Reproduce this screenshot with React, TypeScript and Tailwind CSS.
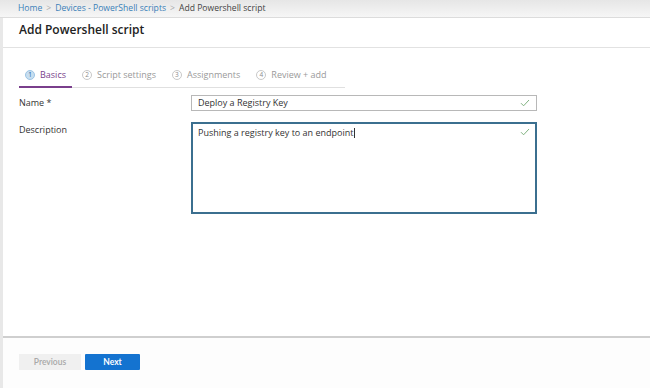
import React from "react";

const font = { fontFamily: '"Open Sans", "Noto Sans", Arial, sans-serif' };

function Check() {
  return (
    <svg width="10" height="8" viewBox="0 0 10 8" className="shrink-0">
      <path d="M1 4.2 L3.6 6.8 L9 1" fill="none" stroke="#7fb27f" strokeWidth="1" />
    </svg>
  );
}

function Step({ n, label, active }: { n: number; label: string; active?: boolean }) {
  return (
    <div
      className={`flex items-center gap-[5px] whitespace-nowrap px-[6px] pb-[4px] -mb-[1px] ${
        active ? "border-b-2 border-[#7a3f8c]" : "border-b-2 border-transparent"
      }`}
    >
      <span
        className={`flex h-[10px] w-[10px] items-center justify-center rounded-full text-[6.5px] leading-none ${
          active ? "bg-[#c7def0] text-[#1a5fa0] border border-[#9cc4e4]" : "border border-[#c8c8c8] text-[#8a8a8a] bg-white"
        }`}
      >
        {n}
      </span>
      <span className={`text-[9px] ${active ? "text-[#7a3f8c]" : "text-[#9a9a9a]"}`}>{label}</span>
    </div>
  );
}

export default function App() {
  return (
    <div className="flex h-[388px] w-[650px] flex-col bg-white text-[#333]" style={font}>
      <div className="flex h-[18px] items-center gap-[4px] border-b border-[#dcdcdc] bg-gradient-to-b from-[#e6e6e6] to-[#f6f6f6] pl-[18px] text-[8.6px]">
        <span className="text-[#3a7fb8]">Home</span>
        <span className="text-[#aaa]">&gt;</span>
        <span className="text-[#3a7fb8]">Devices - PowerShell scripts</span>
        <span className="text-[#aaa]">&gt;</span>
        <span className="text-[#444]">Add Powershell script</span>
      </div>
      <div className="flex flex-1 flex-col border-l-[3px] border-[#e8e8e8]">
        <div className="flex h-[30px] items-center border-b border-[#e2e2e2] pl-[16px] pb-[6px]">
          <h1 className="text-[12px] font-semibold text-[#222]">Add Powershell script</h1>
        </div>
        <div className="flex flex-1 flex-col px-[16px] pt-[20px]">
          <div className="flex w-[326px] gap-[4px] border-b border-[#e0e0e0]">
            <Step n={1} label="Basics" active />
            <Step n={2} label="Script settings" />
            <Step n={3} label="Assignments" />
            <Step n={4} label="Review + add" />
          </div>
          <div className="mt-[7px] flex items-center">
            <div className="w-[172px] text-[9px] text-[#333]">Name *</div>
            <div className="flex h-[16px] w-[346px] items-center justify-between border border-[#b8b8b8] px-[6px] text-[9px] text-[#333]">
              <span>Deploy a Registry Key</span>
              <Check />
            </div>
          </div>
          <div className="mt-[11px] flex items-start">
            <div className="w-[172px] pt-[1px] text-[9px] text-[#333]">Description</div>
            <div className="flex h-[92px] w-[346px] items-start justify-between border-2 border-[#3b6f8f] px-[5px] pt-[2px] text-[9px] text-[#333]">
              <span>
                Pushing a registry key to an endpoint<span className="ml-[1px] inline-block h-[10px] w-[1px] bg-[#333] align-middle" />
              </span>
              <span className="pt-[2px]"><Check /></span>
            </div>
          </div>
        </div>
        <div className="h-[52px] border-t-2 border-[#cfcfcf] bg-[#fdfdfd] flex items-start pt-[16px] pl-[16px] gap-[4px]">
          <button className="h-[16px] w-[62px] bg-[#f0f0f0] text-[8.5px] font-semibold text-[#a8a8a8]" style={{ fontFamily: "Lato, sans-serif" }}>Previous</button>
          <button className="h-[16px] w-[55px] rounded-[1px] bg-[#1473d0] text-[8.5px] font-bold text-white" style={{ fontFamily: "Lato, sans-serif" }}>Next</button>
        </div>
      </div>
    </div>
  );
}
